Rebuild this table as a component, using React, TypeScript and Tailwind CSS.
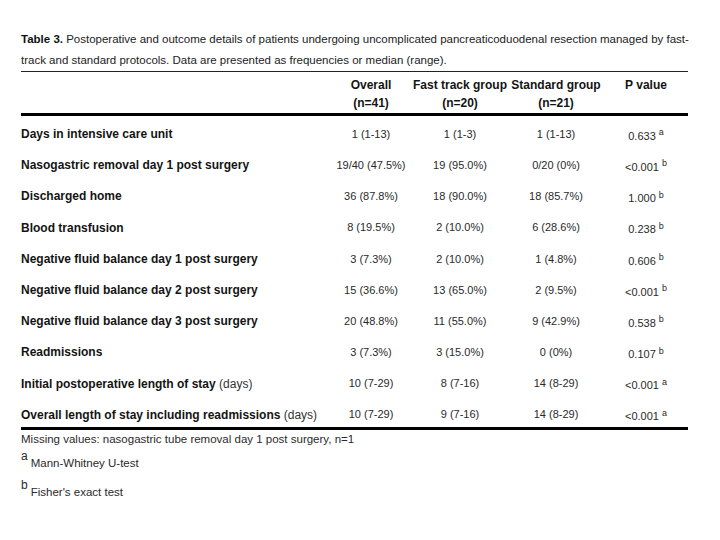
const rows = [
  { label: 'Days in intensive care unit', overall: '1 (1-13)', fast: '1 (1-3)', std: '1 (1-13)', p: '0.633', sup: 'a' },
  { label: 'Nasogastric removal day 1 post surgery', overall: '19/40 (47.5%)', fast: '19 (95.0%)', std: '0/20 (0%)', p: '<0.001', sup: 'b' },
  { label: 'Discharged home', overall: '36 (87.8%)', fast: '18 (90.0%)', std: '18 (85.7%)', p: '1.000', sup: 'b' },
  { label: 'Blood transfusion', overall: '8 (19.5%)', fast: '2 (10.0%)', std: '6 (28.6%)', p: '0.238', sup: 'b' },
  { label: 'Negative fluid balance day 1 post surgery', overall: '3 (7.3%)', fast: '2 (10.0%)', std: '1 (4.8%)', p: '0.606', sup: 'b' },
  { label: 'Negative fluid balance day 2 post surgery', overall: '15 (36.6%)', fast: '13 (65.0%)', std: '2 (9.5%)', p: '<0.001', sup: 'b' },
  { label: 'Negative fluid balance day 3 post surgery', overall: '20 (48.8%)', fast: '11 (55.0%)', std: '9 (42.9%)', p: '0.538', sup: 'b' },
  { label: 'Readmissions', overall: '3 (7.3%)', fast: '3 (15.0%)', std: '0 (0%)', p: '0.107', sup: 'b' },
  { label: 'Initial postoperative length of stay', unit: '(days)', overall: '10 (7-29)', fast: '8 (7-16)', std: '14 (8-29)', p: '<0.001', sup: 'a' },
  { label: 'Overall length of stay including readmissions', unit: '(days)', overall: '10 (7-29)', fast: '9 (7-16)', std: '14 (8-29)', p: '<0.001', sup: 'a' },
];

const cols = 'grid grid-cols-[309px_82px_96px_96px_84px]';

export default function App() {
  return (
    <div className="w-[720px] h-[540px] bg-white text-[#141414] font-['Liberation_Sans',Arial,sans-serif]">
      <div className="pl-[21px] pt-[29px] w-[688px]">
        <div className="border-b border-[#222] text-[11.5px] leading-[21px] text-[#222] whitespace-nowrap">
          <span className="font-bold text-[#111]">Table 3.</span> Postoperative and outcome details of patients undergoing uncomplicated pancreaticoduodenal resection managed by fast-
          <br />
          track and standard protocols. Data are presented as frequencies or median (range).
        </div>

        <div className={`${cols} border-b-[3px] border-black pt-[4px] pb-[1px] text-[12px] font-bold leading-[18px]`}>
          <div />
          <div className="text-center">Overall<br />(n=41)</div>
          <div className="text-center whitespace-nowrap">Fast track group<br />(n=20)</div>
          <div className="text-center whitespace-nowrap">Standard group<br />(n=21)</div>
          <div className="text-center">P value</div>
        </div>

        <div className="flex flex-col gap-[7.2px] border-b-[3px] border-black pt-[6px]">
          {rows.map((r) => (
            <div key={r.label} className={`${cols} h-[24px] items-center`}>
              <div className="whitespace-nowrap text-[12px]">
                <span className="font-bold">{r.label}</span>
                {r.unit && <span className="text-[#333]"> {r.unit}</span>}
              </div>
              <div className="text-center whitespace-nowrap text-[11px] text-[#2a2a2a]">{r.overall}</div>
              <div className="text-center whitespace-nowrap text-[11px] text-[#2a2a2a]">{r.fast}</div>
              <div className="text-center whitespace-nowrap text-[11px] text-[#2a2a2a]">{r.std}</div>
              <div className="text-center whitespace-nowrap text-[11px] text-[#2a2a2a] pt-[4px]">
                {r.p}
                <sup className="ml-[3px] text-[9px]">{r.sup}</sup>
              </div>
            </div>
          ))}
        </div>

        <div className="text-[11.5px] text-[#2a2a2a] leading-[18px]">
          <div>Missing values: nasogastric tube removal day 1 post surgery, n=1</div>
          <div className="flex items-start mt-[1px]">
            <span className="text-[12px] leading-[14px]">a</span>
            <span className="ml-[3px] mt-[5px]">Mann-Whitney U-test</span>
          </div>
          <div className="flex items-start mt-[6px]">
            <span className="text-[12px] leading-[14px]">b</span>
            <span className="ml-[3px] mt-[5px]">Fisher's exact test</span>
          </div>
        </div>
      </div>
    </div>
  );
}
